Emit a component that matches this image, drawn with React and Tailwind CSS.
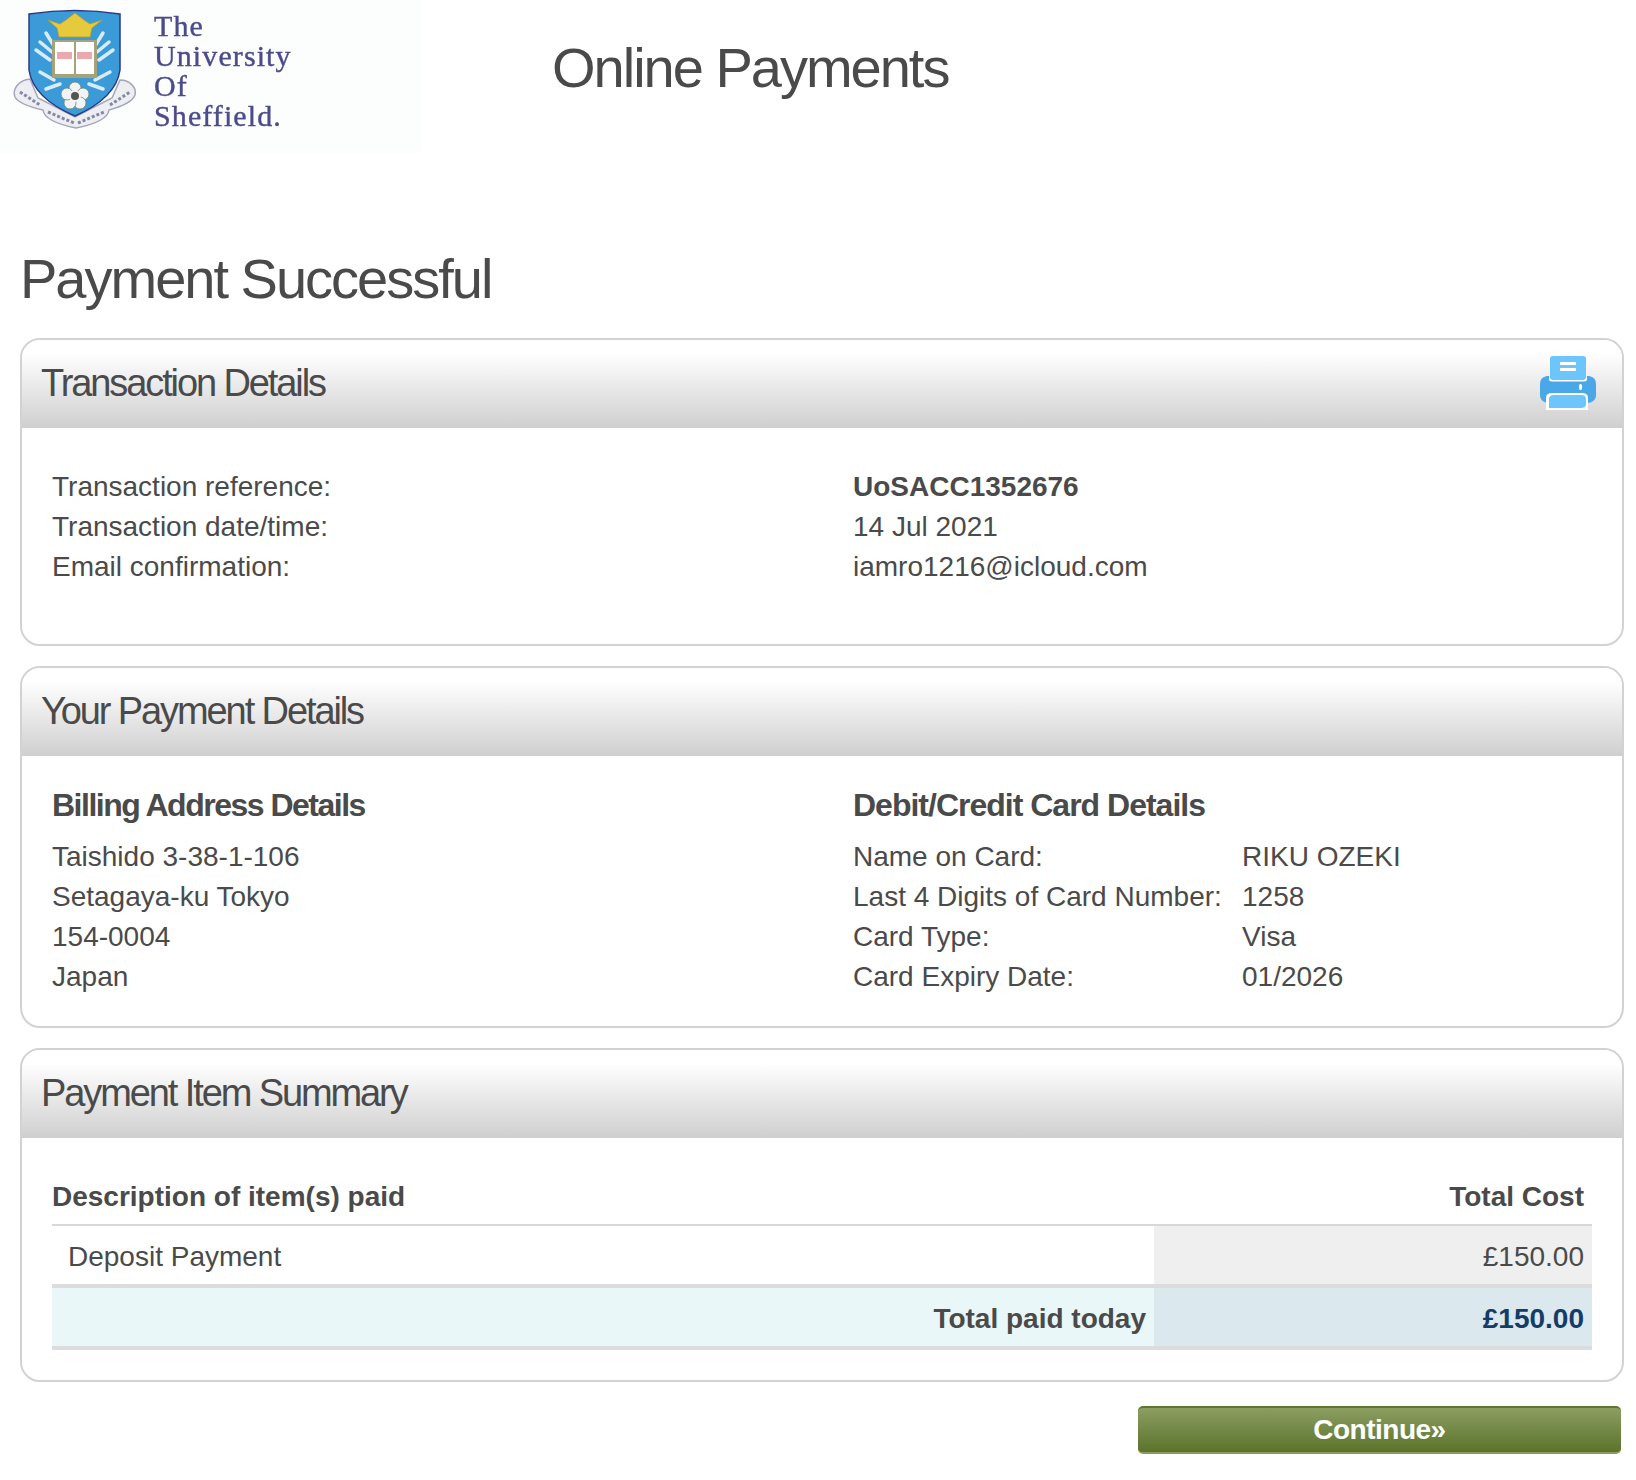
const Logo = () => (
  <div className="w-[421px] h-[153px] bg-[#fcfdfd] flex shrink-0">
    <svg viewBox="0 0 140 135" className="w-[140px] h-[135px] shrink-0 blur-[0.4px]">
      {/* motto scroll */}
      <path d="M30 79 C18 80 12 90 15 97 C18 103 30 107 43 110 C44 118 56 124 76 128 C96 124 108 118 109 110 C120 107 132 103 135 95 C137 88 130 80 120 80 L112 98 L75 117 L38 98 Z" fill="#eceef2" stroke="#a3a6ba" strokeWidth="1.5" />
      <path d="M20 92 L40 105 M48 112 L74 123 M78 123 L104 112 M110 105 L130 92" stroke="#8487a0" strokeWidth="3" strokeDasharray="3 2" fill="none" />
      {/* shield */}
      <path d="M29 14 Q75 7 120 14 L120 70 Q116 98 75 116 Q33 98 29 70 Z" fill="#3b9bd9" stroke="#2a3a85" strokeWidth="1.5" />
      {/* arrows */}
      <path d="M50 60 L36 50 M52 52 L40 42 M54 46 L46 33 M99 60 L113 50 M97 52 L109 42 M95 46 L103 33 M54 80 L40 72 M60 84 L46 89 M95 80 L110 72 M89 84 L103 89" stroke="#d7ebf8" strokeWidth="3.5" strokeLinecap="round" />
      {/* crown */}
      <path d="M48 20 L60 24 L66 20 L75 13 L84 20 L90 24 L102 20 L92 28 L90 37 L59 37 L57 28 Z" fill="#e6ca3c" stroke="#b89d28" strokeWidth="0.8" />
      {/* book */}
      <rect x="52" y="40" width="45" height="38" fill="#a5a377" />
      <rect x="55" y="42" width="19" height="32" fill="#ffffff" />
      <rect x="76" y="42" width="18" height="32" fill="#ffffff" />
      <rect x="57" y="52" width="15" height="7" fill="#eba9ad" />
      <rect x="77" y="52" width="15" height="7" fill="#eba9ad" />
      {/* rose */}
      <circle cx="75" cy="88" r="6" fill="#f2f3f5" stroke="#71856e" strokeWidth="0.8" />
      <circle cx="83" cy="94" r="6" fill="#f2f3f5" stroke="#71856e" strokeWidth="0.8" />
      <circle cx="80" cy="103" r="6" fill="#f2f3f5" stroke="#71856e" strokeWidth="0.8" />
      <circle cx="70" cy="103" r="6" fill="#f2f3f5" stroke="#71856e" strokeWidth="0.8" />
      <circle cx="67" cy="94" r="6" fill="#f2f3f5" stroke="#71856e" strokeWidth="0.8" />
      <circle cx="75" cy="96" r="6" fill="#f2f3f5" />
      <circle cx="75" cy="96" r="4" fill="#55564e" />
    </svg>
    <div className="ml-[14px] mt-[11px] font-['Liberation_Serif',serif] text-[30px] tracking-[1.1px] leading-[30px] text-[#4b4b8c] [-webkit-text-stroke:0.4px_#4b4b8c] blur-[0.3px] whitespace-nowrap">
      <div>The</div>
      <div>University</div>
      <div>Of</div>
      <div>Sheffield.</div>
    </div>
  </div>
);

const PrintIcon = () => (
  <svg viewBox="0 0 56 54" className="w-[56px] h-[54px] mb-[2px]">
    <path d="M7 20 H49 Q56 21 56 28 V40 Q55 46 48 47 H8 Q1 46 0 40 V28 Q0 21 7 20 Z" fill="#4ba8e8" />
    <path d="M9 20 H47 V23 Q47 25.5 44 25.5 H12 Q9 25.5 9 23 Z" fill="#ffffff" />
    <path d="M10 3 Q10 0 13 0 H43 Q46 0 46 3 V21 Q46 24 43 24 H13 Q10 24 10 21 Z" fill="#6cc6fb" />
    <rect x="20" y="6" width="16" height="3" fill="#ffffff" />
    <rect x="20" y="12" width="16" height="3" fill="#ffffff" />
    <rect x="39" y="28" width="3" height="6" rx="1.5" fill="#ffffff" />
    <path d="M6 54 V42 Q6 37 12 37 H42 Q48 37 48 42 V54 Z" fill="#ffffff" />
    <path d="M9 52 V43 Q9 39 14 39 H41 Q46 39 46 43 V48 Q46 52 41 52 Z" fill="#6cc6fb" />
  </svg>
);

const Card = ({ title, icon, children, className }) => (
  <div className={"mx-[20px] w-[1604px] border-2 border-[#d2d2d2] rounded-[20px] overflow-hidden " + className}>
    <div className="h-[88px] bg-gradient-to-b from-[#ffffff] from-[15%] to-[#cfcfcf] flex items-center justify-between pl-[19px] pr-[26px]">
      <h2 className="text-[38px] tracking-[-2.1px] text-[#4a4a4a] mb-[2px]">{title}</h2>
      {icon}
    </div>
    {children}
  </div>
);

const Row = ({ a, b, bold }) => (
  <div className="flex h-[40px] items-center">
    <div className="w-[801px]">{a}</div>
    <div className={bold ? "font-bold" : ""}>{b}</div>
  </div>
);

const CardRow = ({ a, b }) => (
  <div className="flex h-[40px] items-center">
    <div className="w-[389px] whitespace-nowrap">{a}</div>
    <div>{b}</div>
  </div>
);

export default function App() {
  return (
    <div className="w-[1636px] h-[1480px] bg-white font-['Liberation_Sans',Arial,sans-serif] text-[28px] text-[#4a4a4a] overflow-hidden">
      <div className="flex">
        <Logo />
        <h1 className="ml-[131px] mt-[33px] text-[56px] leading-[70px] tracking-[-2px]">Online Payments</h1>
      </div>
      <h1 className="ml-[20px] mt-[88px] text-[56px] leading-[75px] tracking-[-2px]">Payment Successful</h1>

      <Card title="Transaction Details" icon={<PrintIcon />} className="mt-[22px] h-[308px]">
        <div className="pl-[30px] pt-[39px]">
          <Row a="Transaction reference:" b="UoSACC1352676" bold />
          <Row a="Transaction date/time:" b="14 Jul 2021" />
          <Row a="Email confirmation:" b="iamro1216@icloud.com" />
        </div>
      </Card>

      <Card title="Your Payment Details" className="mt-[20px] h-[362px]">
        <div className="pl-[30px] pt-[29px] flex">
          <div className="w-[801px]">
            <h3 className="font-bold text-[32px] tracking-[-1.5px] h-[45px] leading-[40px] mb-[7px]">Billing Address Details</h3>
            <div className="h-[40px] flex items-center">Taishido 3-38-1-106</div>
            <div className="h-[40px] flex items-center">Setagaya-ku Tokyo</div>
            <div className="h-[40px] flex items-center">154-0004</div>
            <div className="h-[40px] flex items-center">Japan</div>
          </div>
          <div>
            <h3 className="font-bold text-[32px] tracking-[-1px] h-[45px] leading-[40px] mb-[7px]">Debit/Credit Card Details</h3>
            <CardRow a="Name on Card:" b="RIKU OZEKI" />
            <CardRow a="Last 4 Digits of Card Number:" b="1258" />
            <CardRow a="Card Type:" b="Visa" />
            <CardRow a="Card Expiry Date:" b="01/2026" />
          </div>
        </div>
      </Card>

      <Card title="Payment Item Summary" className="mt-[20px] h-[334px]">
        <div className="pl-[30px] pr-[30px] pt-[25px]">
          <div className="flex justify-between h-[63px] items-center font-bold pt-[6px] pr-[8px] border-b-2 border-[#d8d8d8]">
            <span>Description of item(s) paid</span>
            <span>Total Cost</span>
          </div>
          <div className="flex h-[58px]">
            <div className="flex-1 pl-[16px] pt-[4px] flex items-center">Deposit Payment</div>
            <div className="w-[438px] bg-[#efefef] flex items-center justify-end pt-[4px] pr-[8px]">£150.00</div>
          </div>
          <div className="flex h-[66px] border-y-4 border-[#dcdcdc]">
            <div className="flex-1 bg-[#e9f7f8] flex items-center justify-end pt-[4px] pr-[8px] font-bold">Total paid today</div>
            <div className="w-[438px] bg-[#dbe8ed] flex items-center justify-end pt-[4px] pr-[8px] font-bold text-[#153c68]">£150.00</div>
          </div>
        </div>
      </Card>

      <div className="flex justify-end pr-[15px] mt-[24px]">
        <button className="w-[483px] h-[48px] rounded-[5px] border-t-2 border-t-[#5f762c] border-b-2 border-b-[#8a9b62] bg-gradient-to-b from-[#8c9e62] to-[#5b732a] text-white font-bold text-[28px] tracking-[-0.5px]">Continue»</button>
      </div>
    </div>
  );
}
